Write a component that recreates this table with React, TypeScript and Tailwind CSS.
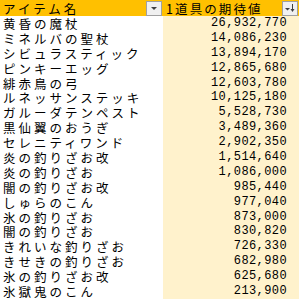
import React from "react";

const rows: [string, string][] = [
  ["黄昏の魔杖", "26,932,770"],
  ["ミネルバの聖杖", "14,086,230"],
  ["シビュラスティック", "13,894,170"],
  ["ピンキーエッグ", "12,865,680"],
  ["緋赤鳥の弓", "12,603,780"],
  ["ルネッサンステッキ", "10,125,180"],
  ["ガルーダテンペスト", "5,528,730"],
  ["黒仙翼のおうぎ", "3,489,360"],
  ["セレニティワンド", "2,902,350"],
  ["炎の釣りざお改", "1,514,640"],
  ["炎の釣りざお", "1,086,000"],
  ["闇の釣りざお改", "985,440"],
  ["しゅらのこん", "977,040"],
  ["氷の釣りざお", "873,000"],
  ["闇の釣りざお", "830,820"],
  ["きれいな釣りざお", "726,330"],
  ["きせきの釣りざお", "682,980"],
  ["氷の釣りざお改", "625,680"],
  ["氷獄鬼のこん", "213,900"],
];

const jp = { fontFamily: '"Noto Sans CJK JP", sans-serif' };
const mono = { fontFamily: '"Liberation Mono", monospace' };

function DropBtn({ sort }: { sort?: boolean }) {
  return (
    <div className="w-[16px] h-[15px] bg-[#f0f0f0] border border-[#a0a0a0] flex items-center justify-center shrink-0">
      {sort ? (
        <svg width="12" height="10" viewBox="0 0 12 10">
          <path d="M1 5 L6 5 L3.5 7.5 Z" fill="#404040" />
          <rect x="8" y="1" width="1" height="7" fill="#404040" />
          <path d="M6.5 6 L10.5 6 L8.5 9 Z" fill="#404040" />
        </svg>
      ) : (
        <svg width="8" height="5" viewBox="0 0 8 5">
          <path d="M1 1 L7 1 L4 4 Z" fill="#404040" />
        </svg>
      )}
    </div>
  );
}

export default function App() {
  return (
    <div className="w-[299px] h-[299px] overflow-hidden bg-white text-black">
      <div className="flex h-[16px]">
        <div className="w-[163px] flex items-center bg-[#ffc000] pl-[3px] pr-[1px]">
          <span className="flex-1 text-[12.5px] leading-[13px] tracking-[3px] whitespace-nowrap" style={jp}>
            アイテム名
          </span>
          <DropBtn />
        </div>
        <div className="flex-1 flex items-center bg-[#ffc000] pl-[3px] pr-[1px]">
          <span className="flex-1 text-[12.5px] leading-[13px] tracking-[2.1px] whitespace-nowrap" style={jp}>
            1道具の期待値
          </span>
          <DropBtn sort />
        </div>
      </div>
      {rows.map(([name, val]) => (
        <div key={name} className="flex h-[14.9px]">
          <div className="w-[163px] flex items-center pl-[3px] bg-white">
            <span className="text-[12.5px] leading-[13px] tracking-[3px] whitespace-nowrap" style={jp}>
              {name}
            </span>
          </div>
          <div className="flex-1 flex items-center justify-end pr-[12px] bg-[#fff2cc]">
            <span className="text-[12px] leading-[13px] tracking-[0.4px]" style={mono}>
              {val}
            </span>
          </div>
        </div>
      ))}
    </div>
  );
}
